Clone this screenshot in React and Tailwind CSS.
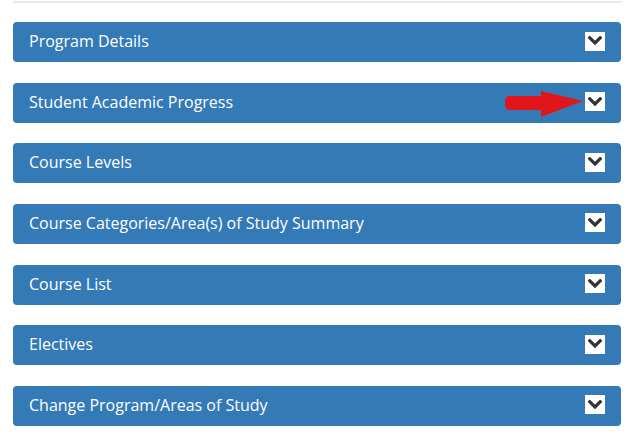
import React from 'react';

const sections = [
    'Program Details',
    'Student Academic Progress',
    'Course Levels',
    'Course Categories/Area(s) of Study Summary',
    'Course List',
    'Electives',
    'Change Program/Areas of Study',
];

const Chevron = () => (
    <span className="flex h-[19px] w-[20px] items-center justify-center bg-white">
        <svg width="14" height="10" viewBox="0 0 14 10">
            <path d="M1.8 1.8 L7 7 L12.2 1.8" fill="none" stroke="#333" strokeWidth="3.2" strokeLinecap="square" />
        </svg>
    </span>
);

// red pointer drawn over the second bar
const Arrow = () => (
    <svg className="absolute left-[-80px] top-[-1px]" width="80" height="28" viewBox="0 0 80 28">
        <path d="M4 5 L36 5 L36 0 L78 10 L36 26 L36 19 L4 19 Q0 19 0 12 Q0 5 4 5 Z" fill="#e3151c" />
    </svg>
);

const App = () => {
    return (
        <div className="min-h-[442px] bg-white px-[13px] font-['Open_Sans',sans-serif]">
            <div className="h-[3px] border-b-2 border-[#e8e8e8] mr-[-1px]" />
            <div className="flex flex-col gap-[20.67px] pt-[19px]">
                {sections.map((title, i) => (
                    <div
                        key={title}
                        className="flex h-10 items-center justify-between rounded-[4px] bg-[#337ab7] pb-0.5 pl-4 pr-[16px] text-[16px] text-white"
                    >
                        <span>{title}</span>
                        <span className="relative">
                            {i === 1 && <Arrow />}
                            <Chevron />
                        </span>
                    </div>
                ))}
            </div>
        </div>
    );
};

export default App;
